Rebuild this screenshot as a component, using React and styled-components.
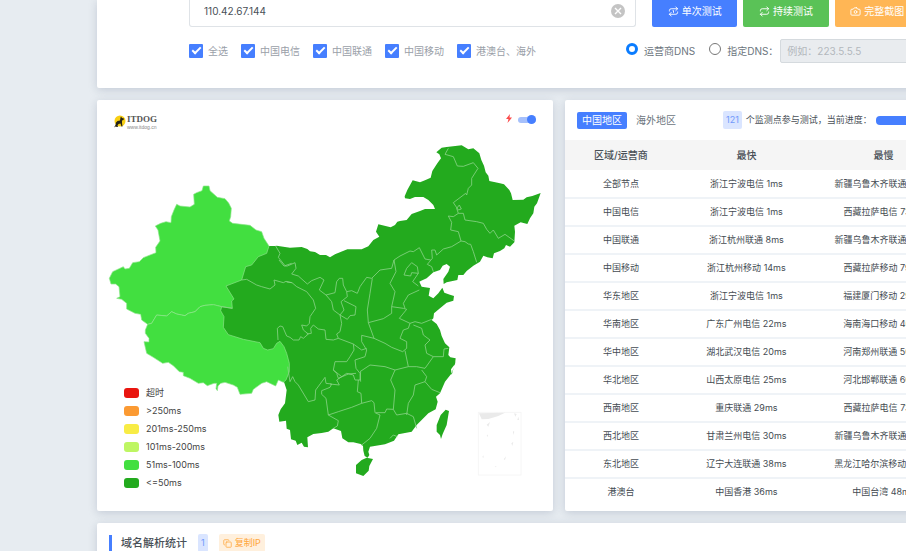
import React from 'react';
import styled, { createGlobalStyle } from 'styled-components';
import { LuRepeat, LuRepeat1, LuCamera, LuCopy } from 'react-icons/lu';

const GlobalStyle = createGlobalStyle`
  *, *::before, *::after { box-sizing: border-box; }
  body {
    margin: 0;
    background: #e7ecf1;
    color: #495057;
    font-family: Inter, "Noto Sans CJK SC", sans-serif;
    font-size: 10px;
    line-height: 14px;
  }
  button, input { font: inherit; }
`;

const Viewport = styled.div`
  height: 100vh;
  overflow: hidden;
`;
const Page = styled.main`
  display: flex;
  flex-direction: column;
  gap: 12px;
  min-width: 951px;
  padding-left: 97px;
`;
const Card = styled.section`
  position: relative;
  background: #fff;
  border-radius: 2px;
  box-shadow: 0 2px 8px rgba(120, 135, 160, 0.32);
`;
const FormCard = styled(Card)`
  display: flex;
  flex-direction: column;
  gap: 12px;
  padding: 0 31px 25px 92px;
  border-radius: 0 0 2px 2px;
`;
const TargetRow = styled.div`
  display: flex;
  gap: 16px;
`;
const TargetBox = styled.div`
  display: flex;
  align-items: center;
  flex: 1;
  height: 27px;
  padding: 0 10px 5px 14px;
  border: 1px solid #dfe3e7;
  border-top: 0;
  border-radius: 0 0 3px 3px;
`;
const TargetInput = styled.input`
  flex: 1;
  min-width: 0;
  padding: 0;
  border: 0;
  outline: 0;
  background: transparent;
  color: #495057;
`;
const ClearButton = styled.button`
  display: flex;
  padding: 0;
  border: 0;
  background: none;
`;
const Actions = styled.div`
  display: flex;
  gap: 6px;
  width: 268px;
`;
const tones = { blue: '#467fff', green: '#5ac257', orange: '#ffb655' };
const ActionButton = styled.button`
  display: flex;
  flex: 1;
  align-items: center;
  justify-content: center;
  gap: 3px;
  height: 27px;
  padding: 0 0 5px;
  border: 0;
  border-radius: 0 0 2px 2px;
  background: ${(p) => tones[p.$tone]};
  color: #fff;
  white-space: nowrap;
`;
const OptionRow = styled.div`
  display: flex;
  align-items: center;
  justify-content: space-between;
`;
const Checks = styled.div`
  display: flex;
  gap: 13px;
`;
const Option = styled.label`
  display: flex;
  align-items: center;
  gap: 5px;
  color: #9aa0a8;
  white-space: nowrap;
`;
const Check = styled.input`
  appearance: none;
  width: 14px;
  height: 14px;
  margin: 0;
  border-radius: 1px;
  background: #467fff;
  display: grid;
  place-items: center;
  &:checked::after {
    content: '';
    width: 9px;
    height: 5px;
    margin-bottom: 3px;
    border: solid #fff;
    border-width: 0 0 2px 2px;
    transform: rotate(-45deg);
  }
`;
const DnsGroup = styled.div`
  display: flex;
  align-items: center;
  width: 294px;
`;
const Radio = styled.input`
  appearance: none;
  width: 12px;
  height: 12px;
  margin: 0 0 4px;
  border: 1px solid #777;
  border-radius: 50%;
  background: #fff;
  &:checked { border: 3px solid #0a7cff; }
`;
const DnsOption = styled(Option)`
  gap: 6px;
  margin-right: ${(p) => p.$after}px;
  color: #6c757d;
`;
const DnsInput = styled.input`
  flex: 1;
  min-width: 0;
  height: 24px;
  padding: 0 6px;
  border: 1px solid #d5dade;
  border-radius: 2px;
  background: #e9ecef;
  &::placeholder { color: #b3b8bd; opacity: 1; }
`;
const Columns = styled.div`
  display: grid;
  grid-template-columns: 456fr 386fr;
  gap: 12px;
`;
const MapHead = styled.header`
  display: flex;
  align-items: center;
  justify-content: space-between;
  height: 35px;
  padding: 8px 17px 0 16px;
`;
const Brand = styled.div`
  display: flex;
  align-items: center;
  gap: 1px;
`;
const BrandName = styled.div`
  color: #555;
  font: bold 9px/10px "Liberation Serif", serif;
`;
const BrandSite = styled.div`
  color: #888;
  font: 5px/6px "Liberation Sans", sans-serif;
`;
const Mode = styled.label`
  display: flex;
  align-items: center;
  gap: 6px;
  margin-top: -6px;
`;
const Toggle = styled.input`
  appearance: none;
  display: flex;
  align-items: center;
  justify-content: flex-end;
  width: 18px;
  height: 6px;
  margin: 2px 0 0;
  border-radius: 3px;
  background: #a6c0fb;
  &::after {
    content: '';
    flex: none;
    width: 9px;
    height: 9px;
    border-radius: 50%;
    background: #467fff;
  }
`;
const MapDrawing = styled.svg`
  display: block;
  width: 100%;
  height: auto;
`;
const Legend = styled.ul`
  position: absolute;
  left: 27px;
  bottom: 19px;
  margin: 0;
  padding: 0;
  list-style: none;
`;
const LegendItem = styled.li`
  display: flex;
  align-items: center;
  gap: 7px;
  height: 18px;
  color: #444;
  font-size: 9px;
  &::before {
    content: '';
    width: 15px;
    height: 10px;
    border-radius: 3px;
    background: ${(p) => p.$color};
  }
`;
const ResultHead = styled.header`
  display: flex;
  align-items: center;
  height: 40px;
  padding: 0 12px;
  white-space: nowrap;
`;
const Tab = styled.button`
  height: 17px;
  padding: 0 5px;
  margin-right: 4px;
  border: 0;
  border-radius: 2px;
  background: ${(p) => (p.$active ? '#467fff' : 'transparent')};
  color: ${(p) => (p.$active ? '#fff' : '#6c757d')};
`;
const Badge = styled.span`
  padding: 2px 3px;
  border-radius: 2px;
  background: #dae5ff;
  color: #7199fb;
  font-size: 9px;
`;
const Progress = styled.div`
  display: flex;
  flex: 1;
  align-items: center;
  gap: 4px;
  margin-left: 38px;
  font-size: 9px;
`;
const ProgressBar = styled.div`
  flex: 1;
  height: 9px;
  border-radius: 4px;
  background: #467fff;
`;
const Table = styled.table`
  width: 100%;
  margin-bottom: 4px;
  border-collapse: collapse;
  table-layout: fixed;
  font-size: 9px;
  text-align: center;
  white-space: nowrap;
`;
const HeadCell = styled.th`
  width: ${(p) => p.$width}%;
  height: 30px;
  padding: 0;
  background: #f5f5f5;
  font-size: 10px;
  font-weight: 500;
`;
const Cell = styled.td`
  height: 28px;
  padding: 0;
  border-bottom: 2px solid #eff3f7;
  color: #444b52;
  tr:last-child & { border-bottom-color: transparent; }
`;
const StatsCard = styled(Card)`
  display: flex;
  align-items: center;
  gap: 11px;
  padding: 11px 12px;
`;
const Title = styled.h2`
  margin: 0;
  padding: 0 0 0 9px;
  border-left: 3px solid #467fff;
  font-size: 11px;
  font-weight: 500;
  line-height: 16px;
`;
const CopyButton = styled.button`
  display: flex;
  align-items: center;
  gap: 3px;
  height: 18px;
  padding: 0 4px;
  border: 0;
  border-radius: 2px;
  background: #fff0dd;
  color: #ffa63a;
  font-size: 9px;
`;

const carriers = ['全选', '中国电信', '中国联通', '中国移动', '港澳台、海外'];
const latency = [
  ['超时', '#e9150f'],
  ['>250ms', '#fb9a33'],
  ['201ms-250ms', '#f8ec45'],
  ['101ms-200ms', '#bef663'],
  ['51ms-100ms', '#42df40'],
  ['<=50ms', '#23aa1e'],
];
const results = [
  ['全部节点', '浙江宁波电信 1ms', '新疆乌鲁木齐联通 79ms'],
  ['中国电信', '浙江宁波电信 1ms', '西藏拉萨电信 73ms'],
  ['中国联通', '浙江杭州联通 8ms', '新疆乌鲁木齐联通 79ms'],
  ['中国移动', '浙江杭州移动 14ms', '西藏拉萨移动 79ms'],
  ['华东地区', '浙江宁波电信 1ms', '福建厦门移动 29ms'],
  ['华南地区', '广东广州电信 22ms', '海南海口移动 46ms'],
  ['华中地区', '湖北武汉电信 20ms', '河南郑州联通 50ms'],
  ['华北地区', '山西太原电信 25ms', '河北邯郸联通 60ms'],
  ['西南地区', '重庆联通 29ms', '西藏拉萨电信 73ms'],
  ['西北地区', '甘肃兰州电信 30ms', '新疆乌鲁木齐联通 79ms'],
  ['东北地区', '辽宁大连联通 38ms', '黑龙江哈尔滨移动 65ms'],
  ['港澳台', '中国香港 36ms', '中国台湾 48ms'],
];

// Moves a list of "x,y" pairs from a region's own grid onto the map's grid.
const at = (dx, dy, list) =>
  list
    .split(' ')
    .map((pair) => {
      const [x, y] = pair.split(',').map(Number);
      return `${x + dx},${y + dy}`;
    })
    .join(' ');
const west = (s) => at(9, 105, s);
const tibet = (s) => at(9, 495, s);
const north = (s) => at(519, 0, s);
const northeast = (s) => at(909, 0, s);
const center = (s) => at(519, 375, s);
const south = (s) => at(519, 675, s);

const mainland = [
  west('507,228 525,228'),
  north('20,332 60,338 95,336 112,342 120,349 135,351 150,360 168,360 180,367 195,358 232,343 275,343 295,334 310,315 328,305 318,290 325,268 362,277 375,270 382,260'),
  northeast('0,258 20,255 30,243 35,237 60,228 75,222 105,222 100,210 85,195 70,186 45,186 30,192 15,190 14,184 22,165 38,136 60,142 75,136 92,128 97,108 112,85 123,70 118,58 109,52 125,38 140,36 185,31 205,43 220,40 238,55 244,75 252,92 257,112 265,122 268,138 300,145 312,148 328,165 333,175 338,195 370,194 380,187 397,183 422,174 411,205 403,215 400,235 390,250 382,267 362,262 343,272 345,290 343,322 330,335 318,330 313,340 300,348 282,355 278,370 262,367 250,362 240,380 220,392 200,408 190,420 175,420 172,435 140,442 131,447 130,432 145,410 150,395 140,387 128,392 120,405 100,412 80,430 62,438'),
  center('448,65 455,80 480,84 476,107 490,115 505,100 517,83 523,98 540,104 552,108 550,122 530,128 510,145 492,160 490,175 485,180 500,192 510,210 515,228 525,250 538,262 535,285 541,292 557,295 555,312 543,328 545,345'),
  south('557,2 555,12 545,40 525,65 510,100 498,110 503,125 497,148 475,160 440,195 425,215 385,223 372,242 345,253 300,260 295,275 298,285 293,293 284,288 280,272 279,258 272,252 250,247 235,247 217,235 213,213 190,205 175,215 155,219 130,222 112,232 114,262 102,260 95,248 82,255 77,242 63,238 60,210 50,206 48,182 28,185 25,165 32,148 45,130 50,90 40,60 30,-20'),
  tibet('530,180 400,160 330,60'),
  west('340,380 370,320 410,270 460,240'),
].join(' ');

const xinjiang = west('28,325 38,305 70,290 75,297 88,295 98,278 118,275 130,263 168,248 167,232 180,213 174,180 166,168 182,160 198,155 213,158 214,140 222,120 230,103 240,108 270,111 283,103 281,73 290,68 306,62 310,48 327,48 330,62 352,82 375,86 386,99 394,115 392,140 388,153 398,160 450,166 468,180 485,185 492,205 507,228 500,250 475,260 455,285 437,290 425,330 378,348 402,387 395,393 397,415 365,410 340,404 315,406 300,410 285,425 265,430 255,437 230,432 215,425 200,438 170,435 155,460 143,463 125,450 122,433 105,430 80,417 80,400 65,388 50,385 60,380 57,350 47,342 33,342');
const xizang = tibet('143,73 155,70 170,45 200,48 215,35 230,42 255,47 265,40 285,35 300,20 315,16 340,14 365,20 362,32 372,50 370,82 385,104 430,118 480,128 490,145 503,150 520,146 530,130 540,124 552,140 560,160 568,190 568,215 558,240 550,247 535,240 527,258 500,245 485,250 460,268 455,280 420,283 412,262 400,255 375,247 362,250 354,258 352,272 348,266 350,250 342,250 322,257 310,248 295,250 270,235 250,227 250,217 238,215 220,197 205,187 188,190 160,172 140,160 132,125 147,126 147,115 136,100 136,90');

const borders = [
  west('527,228 540,250 535,262 555,287 575,280'),
  west('425,330 440,328 470,345 485,350 510,357 525,345 522,330 550,338 558,334 575,338'),
  west('365,410 397,415'),
  center('27,0 42,18 52,18 75,8 78,25 65,42 85,48 112,72 125,62 150,52 162,60 148,90 168,105 195,98 200,65 208,55 218,55 220,75 230,95 245,92 262,100 270,80 290,52 305,55 330,30 365,25 372,0'),
  center('50,66 66,68 80,80 110,95 130,120 137,145 120,170 118,190 110,198 95,195 100,210 115,222 100,235 92,230 87,240 70,240 60,232 50,228 38,200 30,198 22,205 24,240'),
  center('168,105 185,125 190,150 210,165 222,150 213,125 232,110 230,95'),
  center('222,122 258,140 255,165 240,167 232,178 210,165 215,190 210,215 200,222 205,235 190,240 168,238 165,210 145,207 130,195 122,205 124,220 110,222'),
  center('205,235 250,252 252,270 240,290 230,305 195,305 190,330 200,340 205,355 235,342 258,340'),
  center('307,55 300,100 292,150 295,188 312,235 275,226 275,245 290,270 285,290 255,300 258,325 270,340 272,365'),
  center('250,252 275,270 290,265'),
  center('372,0 378,35 360,70 375,95 365,140 365,160 340,176 295,188'),
  center('365,140 400,145 410,148 388,175 420,190 435,185 455,190 485,178'),
  center('405,145 400,130 415,105 448,90'),
  center('420,190 415,205 400,210 390,235 410,245 410,265 398,275 365,262 345,250 312,235'),
  center('405,272 415,320 375,330 345,320 300,315 270,335'),
  center('430,195 455,205 460,225 480,240 465,255 470,280 490,290 520,290 522,267 535,265'),
  center('490,290 465,325 440,320 415,320'),
  center('402,45 410,25 425,8 442,20 445,40 425,38 422,48 402,45'),
  center('445,40 428,65 445,78'),
  south('53,20 60,65 68,50 75,65 85,75 115,125 135,120 137,90 165,52 168,70 185,72 180,82 155,92 155,103 168,115 175,165 205,182 202,198 190,205'),
  south('190,30 215,50 200,60 208,75 180,72'),
  south('215,50 230,40 250,45 255,60 270,60 272,35'),
  south('265,60 262,95 273,100 275,130 245,142 205,155 175,165'),
  south('275,130 305,122 312,128 315,158 330,165 320,205 300,235 275,255'),
  south('375,30 362,60 375,90 370,148 350,147 345,158 318,158'),
  south('370,148 380,165 410,160 430,170 440,205'),
  south('410,165 415,130 430,105 435,75 465,65 470,50 455,30'),
  south('465,65 485,88 510,98'),
  south('360,235 370,225 382,230'),
  northeast('145,40 135,58 160,65 172,93 190,94 220,83 234,100 215,130 215,150 205,160 200,180 197,175 160,203 175,225 184,222 178,210 170,220 175,235 160,245 145,243 155,262 152,285 175,290 183,318 155,335 130,342 110,360 105,345 95,345 97,370 82,388 95,395 100,410'),
  northeast('175,235 190,235 195,255 230,260 250,265 260,283 270,295 280,285 295,310 315,298 343,318'),
  northeast('183,318 195,320 205,327 212,328 220,350 230,382'),
  northeast('-18,375 0,363 30,348 40,350 58,338 75,372 92,375'),
];

const straits = [
  '650,194 660,186 655,200', '732,160 740,162 736,170', '745,170 747,180 742,180',
  '729,213 733,215 729,225', '724,250 730,245 727,258', '701,298 708,289 705,300',
  '650,225 654,224 653,232', '637,290 641,286 640,295', '674,320 680,317 677,322',
];

function ChinaMap() {
  return (
    <MapDrawing viewBox="0 0 1368 1050" role="img" aria-label="中国地区">
      <polygon points={mainland} fill="#23aa1e" />
      <g fill="#42df40" stroke="#8ce58a" strokeWidth="2" strokeLinejoin="round">
        <polygon points={xinjiang} />
        <polygon points={xizang} />
      </g>
      <g fill="none" stroke="#8bd488" strokeOpacity="0.8" strokeWidth="3" strokeLinejoin="round">
        {borders.map((line) => <polyline key={line} points={line} />)}
      </g>
      <g fill="#23aa1e">
        <polygon points={south('275,300 290,293 309,297 298,318 296,332 280,348 258,340 258,315')} />
        <polygon points={south('527,149 537,153 530,195 518,222 513,237 510,225 500,215 500,195 512,165')} />
      </g>
      <rect x="1144" y="832" width="128" height="188" fill="none" stroke="#f6f6f6" strokeWidth="3" />
      <g fill="#eaeaea">
        <polygon points={south('627,160 705,158 685,168 655,177 635,178')} />
        {straits.map((s) => <polygon key={s} points={south(s)} />)}
      </g>
    </MapDrawing>
  );
}

function DogLogo() {
  return (
    <svg width="13" height="13" viewBox="0 0 26 26" aria-hidden="true">
      <circle cx="14" cy="12" r="11" fill="#f8cf13" />
      <path d="M15 5l1-2 2 3 4 1-1 3-3 1v5l1 7h-2l-2-6-4 1-2 3 1 3H8l-3-1-3 2 3-5 1-5 3-3 5-1z" fill="#252316" />
    </svg>
  );
}

export default function App() {
  return (
    <Viewport>
      <GlobalStyle />
      <Page>
        <FormCard>
          <TargetRow>
            <TargetBox>
              <TargetInput aria-label="IP" defaultValue="110.42.67.144" />
              <ClearButton aria-label="清除">
                <svg width="14" height="14" viewBox="0 0 14 14">
                  <circle cx="7" cy="7" r="7" fill="#c4c4c4" />
                  <path d="M4 4l6 6M10 4l-6 6" stroke="#fff" strokeWidth="1.4" />
                </svg>
              </ClearButton>
            </TargetBox>
            <Actions>
              <ActionButton $tone="blue"><LuRepeat1 size={11} />单次测试</ActionButton>
              <ActionButton $tone="green"><LuRepeat size={11} />持续测试</ActionButton>
              <ActionButton $tone="orange"><LuCamera size={11} />完整截图</ActionButton>
            </Actions>
          </TargetRow>
          <OptionRow>
            <Checks>
              {carriers.map((name) => (
                <Option key={name}><Check type="checkbox" defaultChecked />{name}</Option>
              ))}
            </Checks>
            <DnsGroup>
              <DnsOption $after={14}><Radio type="radio" name="dns" defaultChecked />运营商DNS</DnsOption>
              <DnsOption $after={2}><Radio type="radio" name="dns" />指定DNS：</DnsOption>
              <DnsInput aria-label="指定DNS" placeholder="例如：223.5.5.5" disabled />
            </DnsGroup>
          </OptionRow>
        </FormCard>
        <Columns>
          <Card>
            <MapHead>
              <Brand>
                <DogLogo />
                <div>
                  <BrandName>ITDOG</BrandName>
                  <BrandSite>www.itdog.cn</BrandSite>
                </div>
              </Brand>
              <Mode>
                <svg width="6" height="9" viewBox="0 0 12 18" aria-hidden="true">
                  <path d="M8 0L0 10h5L3 18l9-11H7z" fill="#fb4a4a" />
                </svg>
                <Toggle type="checkbox" role="switch" aria-label="切换" defaultChecked />
              </Mode>
            </MapHead>
            <ChinaMap />
            <Legend>
              {latency.map(([text, color]) => <LegendItem key={text} $color={color}>{text}</LegendItem>)}
            </Legend>
          </Card>
          <Card>
            <ResultHead>
              <Tab $active>中国地区</Tab>
              <Tab>海外地区</Tab>
              <Progress>
                <Badge>121</Badge>
                <span>个监测点参与测试，当前进度：</span>
                <ProgressBar />
              </Progress>
            </ResultHead>
            <Table>
              <thead>
                <tr>
                  <HeadCell $width={29}>区域/运营商</HeadCell>
                  <HeadCell $width={36}>最快</HeadCell>
                  <HeadCell $width={35}>最慢</HeadCell>
                </tr>
              </thead>
              <tbody>
                {results.map((row) => (
                  <tr key={row[0]}>{row.map((value, i) => <Cell key={i}>{value}</Cell>)}</tr>
                ))}
              </tbody>
            </Table>
          </Card>
        </Columns>
        <StatsCard>
          <Title>域名解析统计</Title>
          <Badge>1</Badge>
          <CopyButton><LuCopy size={9} />复制IP</CopyButton>
        </StatsCard>
      </Page>
    </Viewport>
  );
}
